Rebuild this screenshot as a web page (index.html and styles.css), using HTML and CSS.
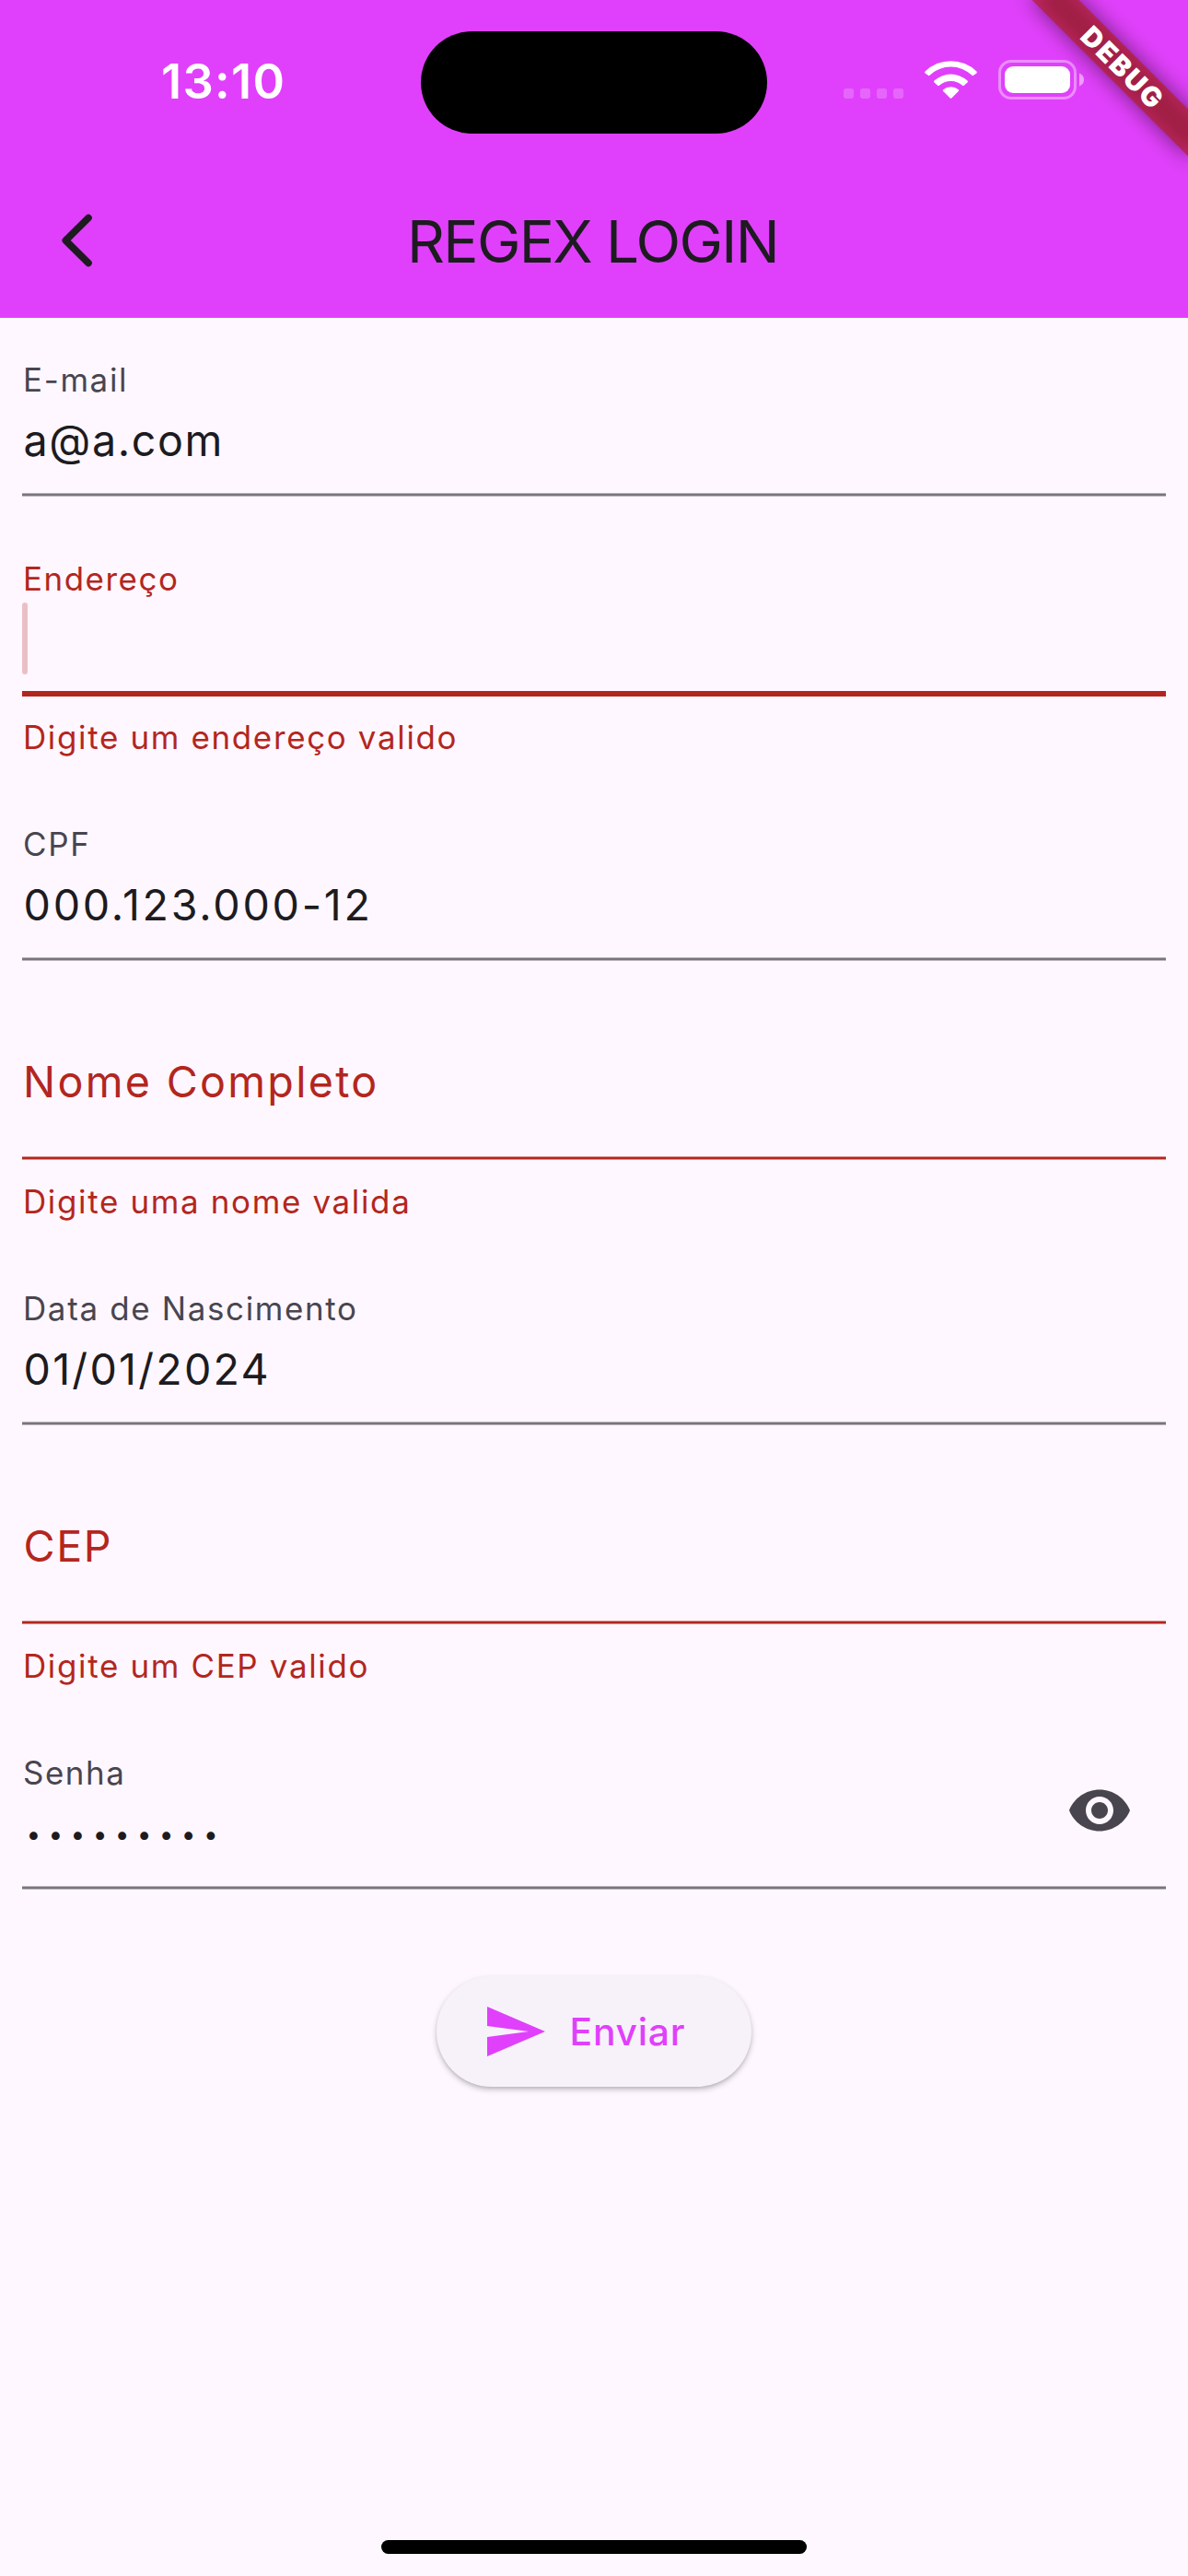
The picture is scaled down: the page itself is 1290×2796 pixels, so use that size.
FILE: index.html
```html
<!DOCTYPE html>
<html lang="pt-BR">
<head>
  <meta charset="utf-8">
  <title>Regex Login</title>
  <link rel="stylesheet" href="styles.css">
</head>
<body>
  <div class="screen">
    <header class="header">
      <div class="status-bar">
        <span class="time">13:10</span>
        <span class="island"></span>
        <svg class="status-icons" width="262" height="48" viewBox="0 0 262 48" fill="#fff">
          <g opacity=".2">
            <rect x="0" y="33" width="11" height="11" rx="3"/>
            <rect x="18" y="33" width="11" height="11" rx="3"/>
            <rect x="36" y="33" width="11" height="11" rx="3"/>
            <rect x="54" y="33" width="11" height="11" rx="3"/>
          </g>
          <g>
            <path d="M88.6 16A39.7 39.7 0 0 1 144.4 16Q145.3 17 144.4 17.9L141.2 20.2Q140.4 20.9 139.5 20.2A33 33 0 0 0 93.5 20.2Q92.6 20.9 91.8 20.2L88.6 17.9Q87.7 17 88.6 16Z" transform="translate(0 -1.4)"/>
            <path d="M98.5 24.6A26.6 26.6 0 0 1 134.5 24.6Q135.4 25.5 134.5 26.4L130.9 29.8Q130 30.5 129.1 29.8A19.2 19.2 0 0 0 103.9 29.8Q103 30.5 102.1 29.8L98.5 26.4Q97.6 25.5 98.5 24.6Z"/>
            <path d="M108.2 34.2A13 13 0 0 1 124.8 34.2Q125.7 35.1 124.8 36L117.3 43.5Q116.5 44.2 115.7 43.5L108.2 36Q107.3 35.1 108.2 34.2Z"/>
          </g>
          <rect x="169.5" y="3.5" width="82" height="40" rx="12.5" fill="none" stroke="#fff" stroke-width="3" opacity=".4"/>
          <rect x="175" y="9" width="71" height="29" rx="9"/>
          <path d="M256 16.5Q261 18.500 261 23.500T256 30.500Z" opacity=".5"/>
        </svg>
      </div>
      <div class="app-bar">
        <svg class="back" width="40" height="64" viewBox="0 0 40 64" fill="none" stroke="#1d1b20" stroke-width="7.600" stroke-linecap="round" stroke-linejoin="round">
          <path d="M32 7.500L7.300 32L32 56.500"/>
        </svg>
        <h1 class="title">REGEX LOGIN</h1>
      </div>
    </header>

    <main class="form">
      <div class="field">
        <div class="label">E-mail</div>
        <div class="value">a@a.com</div>
      </div>

      <div class="group">
        <div class="field field-error field-focus">
          <div class="label label-tight">Endereço</div>
          <div class="cursor"></div>
        </div>
        <div class="helper">Digite um endereço valido</div>
      </div>

      <div class="field">
        <div class="label">CPF</div>
        <div class="value value-cpf">000.123.000-12</div>
      </div>

      <div class="group">
        <div class="field field-error">
          <div class="placeholder">Nome Completo</div>
        </div>
        <div class="helper">Digite uma nome valida</div>
      </div>

      <div class="field">
        <div class="label">Data de Nascimento</div>
        <div class="value value-date">01/01/2024</div>
      </div>

      <div class="group">
        <div class="field field-error">
          <div class="placeholder placeholder-caps">CEP</div>
        </div>
        <div class="helper">Digite um CEP valido</div>
      </div>

      <div class="field field-icon">
        <div>
          <div class="label label-tight">Senha</div>
          <div class="value value-secret">•••••••••</div>
        </div>
        <svg class="eye" width="72" height="72" viewBox="0 0 24 24" fill="#49454f">
          <path d="M12 4.500C7 4.500 2.730 7.610 1 12c1.730 4.390 6 7.500 11 7.500s9.270-3.110 11-7.500c-1.730-4.390-6-7.500-11-7.500zM12 17c-2.760 0-5-2.240-5-5s2.240-5 5-5 5 2.240 5 5-2.240 5-5 5zm0-8c-1.660 0-3 1.340-3 3s1.340 3 3 3 3-1.340 3-3-1.340-3-3-3z"/>
        </svg>
      </div>

      <button class="submit" type="button">
        <svg width="72" height="72" viewBox="0 0 24 24" fill="#e040fb">
          <path d="M2.010 21L23 12 2.010 3 2 10l15 2-15 2z"/>
        </svg>
        <span>Enviar</span>
      </button>
    </main>

    <footer class="home"><span class="home-bar"></span></footer>

    <div class="corner">
      <div class="banner"><span>DEBUG</span></div>
    </div>
  </div>
</body>
</html>
```
FILE: styles.css
```css
* {
  box-sizing: border-box;
}

body {
  margin: 0;
  background: #fef7ff;
  color: #1d1b20;
  font-family: Inter, "Liberation Sans", sans-serif;
}

.screen {
  position: relative;
  display: flex;
  flex-direction: column;
  width: 1290px;
  height: 2796px;
  overflow: hidden;
}

/* Header */

.header {
  height: 345px;
  background: #e040fb;
}

.status-bar {
  display: flex;
  align-items: center;
  height: 177px;
  padding-left: 175px;
}

.time {
  width: 282px;
  padding-bottom: 2px;
  color: #fff;
  font-size: 52.3px;
  font-weight: 600;
  line-height: 60px;
  letter-spacing: 1.33px;
}

.island {
  width: 376px;
  height: 111px;
  margin-top: 1px;
  border-radius: 56px;
  background: #000;
}

.status-icons {
  margin: 0 0 3px 83px;
}

.app-bar {
  display: grid;
  grid-template-columns: 170px 1fr 170px;
  align-items: center;
  height: 168px;
}

.back {
  margin-left: 64px;
}

.title {
  margin: 0;
  padding-top: 1px;
  padding-right: 3px;
  text-align: center;
  font-size: 63.7px;
  font-weight: 400;
  line-height: 84px;
  letter-spacing: -1.74px;
}

/* Form */

.form {
  display: flex;
  flex: 1;
  flex-direction: column;
  gap: 48px;
  padding: 26px 24px 0;
}

.field {
  height: 168px;
  padding-top: 17px;
  background: linear-gradient(#b9b3bc 1px, #79747e 1px, #79747e 3px, #b9b3bc 3px) bottom / 100% 4px no-repeat;
}

.field-error {
  color: #b3261e;
  background-image: linear-gradient(#d98e8e 1px, #b3261e 1px, #b3261e 3px, #d98e8e 3px);
}

.field-focus {
  height: 169px;
  margin-bottom: -1px;
  background: linear-gradient(#b3261e, #b3261e) bottom / 100% 6px no-repeat;
}

.label,
.helper {
  padding-left: 1px;
  font-size: 34.9px;
  line-height: 48px;
  letter-spacing: 1.68px;
}

.label {
  color: #49454f;
}

.label-tight {
  letter-spacing: 1.55px;
}

.field-error .label {
  color: inherit;
}

.helper {
  height: 72px;
  padding-top: 21px;
  color: #b3261e;
}

.value {
  margin-top: 6px;
  padding-left: 1.5px;
  font-size: 46.6px;
  line-height: 72px;
  letter-spacing: 1.62px;
}

.value-cpf {
  letter-spacing: 2.75px;
}

.value-date {
  letter-spacing: 2.25px;
}

.value-secret {
  margin-top: 7px;
  padding-left: 4.5px;
  font-size: 28px;
  letter-spacing: 8.3px;
}

.placeholder {
  margin-top: 30px;
  padding-left: 1px;
  font-size: 46.6px;
  line-height: 72px;
  letter-spacing: 2.3px;
}

.placeholder-caps {
  padding-left: 1.5px;
  letter-spacing: 1.6px;
}

.cursor {
  width: 6px;
  height: 78px;
  margin-top: 2px;
  border-radius: 3px;
  background: #ebc0c5;
}

.field-icon {
  display: flex;
  justify-content: space-between;
}

.eye {
  margin: 29px 36px 0 0;
}

.submit {
  display: flex;
  align-items: center;
  align-self: center;
  gap: 24px;
  width: 342px;
  height: 120px;
  margin-top: 46px;
  padding: 0 0 0 48.5px;
  border: 0;
  border-radius: 60px;
  background: #f7f2fa;
  box-shadow: 0 3px 6px rgba(0, 0, 0, .22), 0 2px 3px rgba(0, 0, 0, .08);
  color: #e040fb;
  font: 500 40.8px/60px Inter, "Liberation Sans", sans-serif;
  letter-spacing: .78px;
}

/* Home indicator */

.home {
  display: flex;
  justify-content: center;
  height: 39px;
}

.home-bar {
  width: 462px;
  height: 15px;
  border-radius: 8px;
  background: #000;
}

/* Debug ribbon */

.corner {
  position: absolute;
  top: 0;
  right: 0;
  width: 240px;
  height: 240px;
  overflow: hidden;
}

.banner {
  position: absolute;
  top: 53.5px;
  left: 38px;
  width: 260px;
  height: 36px;
  transform: rotate(45deg);
  color: #fff;
  font-size: 29.7px;
  font-weight: 900;
  line-height: 36px;
  letter-spacing: 2px;
  text-align: center;
}

.banner::before,
.banner::after {
  content: "";
  position: absolute;
  inset: 0;
}

.banner::before {
  right: 10px;
  left: 10px;
  background: rgba(0, 0, 0, .5);
  filter: blur(11.9px);
}

.banner::after {
  background: rgba(183, 28, 28, .63);
}

.banner span {
  position: relative;
  z-index: 1;
  padding-left: 4px;
}
```
